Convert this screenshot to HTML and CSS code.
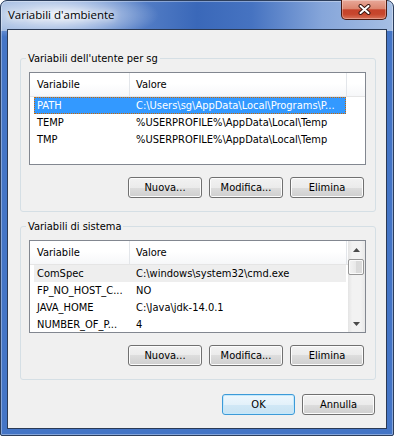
FILE: index.html
```html
<!DOCTYPE html>
<html lang="it">
<head>
<meta charset="UTF-8">
<meta name="viewport" content="width=device-width, initial-scale=1.0">
<title>Variabili d'ambiente</title>
<link rel="stylesheet" href="styles.css">
</head>
<body>

<div class="window">
  <div class="titlebar">
    <span class="title">Variabili d'ambiente</span>
    <button class="close" title="Chiudi">
      <svg width="13" height="11" viewBox="0 0 13 11">
        <path d="M2.5 2 L10.5 9 M10.5 2 L2.5 9" stroke="#3b1711" stroke-width="4" stroke-linecap="round"/>
        <path d="M2.5 2 L10.5 9 M10.5 2 L2.5 9" stroke="#ffffff" stroke-width="2" stroke-linecap="round"/>
      </svg>
    </button>
  </div>

  <div class="client">
    <fieldset class="group group-user">
      <legend>Variabili dell'utente per sg</legend>
      <div class="listview">
        <div class="lv-main">
          <div class="lv-header">
            <span class="hd-name">Variabile</span>
            <span class="hd-value">Valore</span>
            <span class="hd-rest"></span>
          </div>
          <div class="lv-row selected"><span class="cell-name">PATH</span><span class="cell-value">C:\Users\sg\AppData\Local\Programs\P...</span></div>
          <div class="lv-row"><span class="cell-name">TEMP</span><span class="cell-value">%USERPROFILE%\AppData\Local\Temp</span></div>
          <div class="lv-row"><span class="cell-name">TMP</span><span class="cell-value">%USERPROFILE%\AppData\Local\Temp</span></div>
        </div>
      </div>
      <div class="actions">
        <button class="btn">Nuova...</button>
        <button class="btn">Modifica...</button>
        <button class="btn">Elimina</button>
      </div>
    </fieldset>

    <fieldset class="group group-system">
      <legend>Variabili di sistema</legend>
      <div class="listview">
        <div class="lv-main">
          <div class="lv-header">
            <span class="hd-name">Variabile</span>
            <span class="hd-value">Valore</span>
          </div>
          <div class="lv-row inactive"><span class="cell-name">ComSpec</span><span class="cell-value">C:\windows\system32\cmd.exe</span></div>
          <div class="lv-row"><span class="cell-name">FP_NO_HOST_C...</span><span class="cell-value">NO</span></div>
          <div class="lv-row"><span class="cell-name">JAVA_HOME</span><span class="cell-value">C:\Java\jdk-14.0.1</span></div>
          <div class="lv-row"><span class="cell-name">NUMBER_OF_P...</span><span class="cell-value">4</span></div>
        </div>
        <div class="scrollbar">
          <div class="sb-button">
            <svg width="7" height="4" viewBox="0 0 7 4"><polygon points="3.5,0 7,4 0,4" fill="#4a4a4a"/></svg>
          </div>
          <div class="sb-thumb"></div>
          <div class="sb-track"></div>
          <div class="sb-button">
            <svg width="7" height="4" viewBox="0 0 7 4"><polygon points="0,0 7,0 3.5,4" fill="#4a4a4a"/></svg>
          </div>
        </div>
      </div>
      <div class="actions">
        <button class="btn">Nuova...</button>
        <button class="btn">Modifica...</button>
        <button class="btn">Elimina</button>
      </div>
    </fieldset>

    <div class="dialog-actions">
      <button class="btn btn-default">OK</button>
      <button class="btn">Annulla</button>
    </div>
  </div>
</div>

</body>
</html>
```

FILE: styles.css
```css
* {
  box-sizing: border-box;
}
body {
  margin: 0;
  background: #ffffff;
  font-family: "DejaVu Sans Condensed", "DejaVu Sans", sans-serif;
  font-stretch: condensed;
  font-size: 11px;
  color: #000;
}

/* window frame */
.window {
  width: 394px;
  height: 436px;
  border: 1px solid #2c3e5c;
  border-radius: 7px 7px 2px 2px;
  padding: 0 6px 6px;
  display: flex;
  flex-direction: column;
  background:
    radial-gradient(ellipse 100px 26px at 58px 14px, rgba(255,255,255,0.9), rgba(255,255,255,0) 100%),
    linear-gradient(90deg, #93b0dc 0%, #6d93d2 22%, #3a68b9 50%, #4673c1 64%, #86a6da 82%, #a6bfe4 100%) top / 100% 30px no-repeat,
    #4475c6;
  box-shadow: inset 0 0 0 1px rgba(255,255,255,0.35);
}
.titlebar {
  height: 28px;
  display: flex;
  align-items: flex-start;
}
.title {
  flex: 1;
  margin-top: 6px;
  padding-left: 1px;
  font-family: "Open Sans", "Noto Sans", sans-serif;
  font-stretch: normal;
  font-size: 11.5px;
  line-height: 16px;
  color: #000;
  text-shadow: 0 0 6px #fff, 0 0 10px rgba(255,255,255,0.8);
}
.close {
  margin-top: -1px;
  width: 46px;
  height: 20px;
  padding: 0;
  border: 1px solid #4a1a12;
  border-top: none;
  border-radius: 0 0 5px 5px;
  background: linear-gradient(#e8a899 0%, #dc8670 45%, #c5432b 52%, #c7462d 75%, #d8735a 100%);
  box-shadow: inset 0 0 0 1px rgba(255,255,255,0.3);
  display: flex;
  align-items: center;
  justify-content: center;
}
.client {
  flex: 1;
  border: 1px solid #2a3a55;
  background: #f0f0f0;
}

/* group boxes */
.group {
  width: 356px;
  margin: 22px 0 0 12px;
  padding: 0 9px 13px 8px;
  border: 1px solid #d5dfe5;
  border-radius: 3px;
}
.group-system {
  margin-top: 8px;
}
.group legend {
  margin-left: -3px;
  padding: 0 2px;
  line-height: 13px;
}

/* list view */
.listview {
  margin-top: 7px;
  height: 93px;
  border: 1px solid #828790;
  background: #fff;
  display: flex;
  overflow: hidden;
}
.lv-main {
  flex: 1;
  overflow: hidden;
}
.lv-header {
  display: flex;
  height: 24px;
  line-height: 23px;
  border-bottom: 1px solid #e5e5e5;
  background: linear-gradient(#ffffff 0%, #ffffff 45%, #f6f7f9 100%);
}
.hd-name {
  width: 100px;
  padding-left: 7px;
  border-right: 1px solid #e3e6ea;
}
.hd-value {
  width: 217px;
  padding-left: 6px;
  border-right: 1px solid #e3e6ea;
}
.hd-rest {
  flex: 1;
}
.lv-row {
  display: flex;
  width: 312px;
  height: 17px;
  line-height: 17px;
  margin-left: 4px;
  white-space: nowrap;
}
.cell-name {
  width: 95px;
  padding-left: 3px;
  overflow: hidden;
}
.cell-value {
  flex: 1;
  padding-left: 7px;
  overflow: hidden;
}
.lv-row.selected {
  background: #3399ff;
  color: #fff;
  outline: 1px dotted #cc6600;
  outline-offset: -1px;
}
.lv-row.inactive {
  background: #eeeeee;
}

/* scroll bar */
.scrollbar {
  width: 17px;
  display: flex;
  flex-direction: column;
  background: linear-gradient(90deg, #e4e4e4, #f2f2f2 25%, #f2f2f2 75%, #e8e8e8);
}
.sb-button {
  height: 17px;
  display: flex;
  align-items: center;
  justify-content: center;
}
.sb-thumb {
  height: 16px;
  margin: 1px 1px 0 0;
  border: 1px solid #979797;
  border-radius: 2px;
  background: linear-gradient(90deg, #f3f3f3, #e8e8e8 50%, #d9d9d9 50%, #dcdcdc);
  box-shadow: inset 0 0 0 1px #fafafa;
}
.sb-track {
  flex: 1;
}

/* buttons */
.actions {
  display: flex;
  justify-content: flex-end;
  gap: 7px;
  margin-top: 12px;
  padding-right: 2px;
}
.btn {
  width: 74px;
  height: 21px;
  padding: 0;
  border: 1px solid #707070;
  border-radius: 3px;
  background: linear-gradient(#f2f2f2 0%, #ebebeb 50%, #dddddd 50%, #cfcfcf 100%);
  box-shadow: inset 0 0 0 1px #fcfcfc;
  font: inherit;
  color: #000;
}
.dialog-actions {
  display: flex;
  justify-content: flex-end;
  gap: 7px;
  margin-top: 14px;
  padding-right: 11px;
}
.dialog-actions .btn {
  width: 73px;
}
.btn-default {
  border-color: #3c9ad8;
  background: linear-gradient(#eef7fd 0%, #e3f1fa 50%, #d1e8f6 50%, #c8e3f3 100%);
  box-shadow: inset 0 0 0 1px #c4e8fb;
}
```
